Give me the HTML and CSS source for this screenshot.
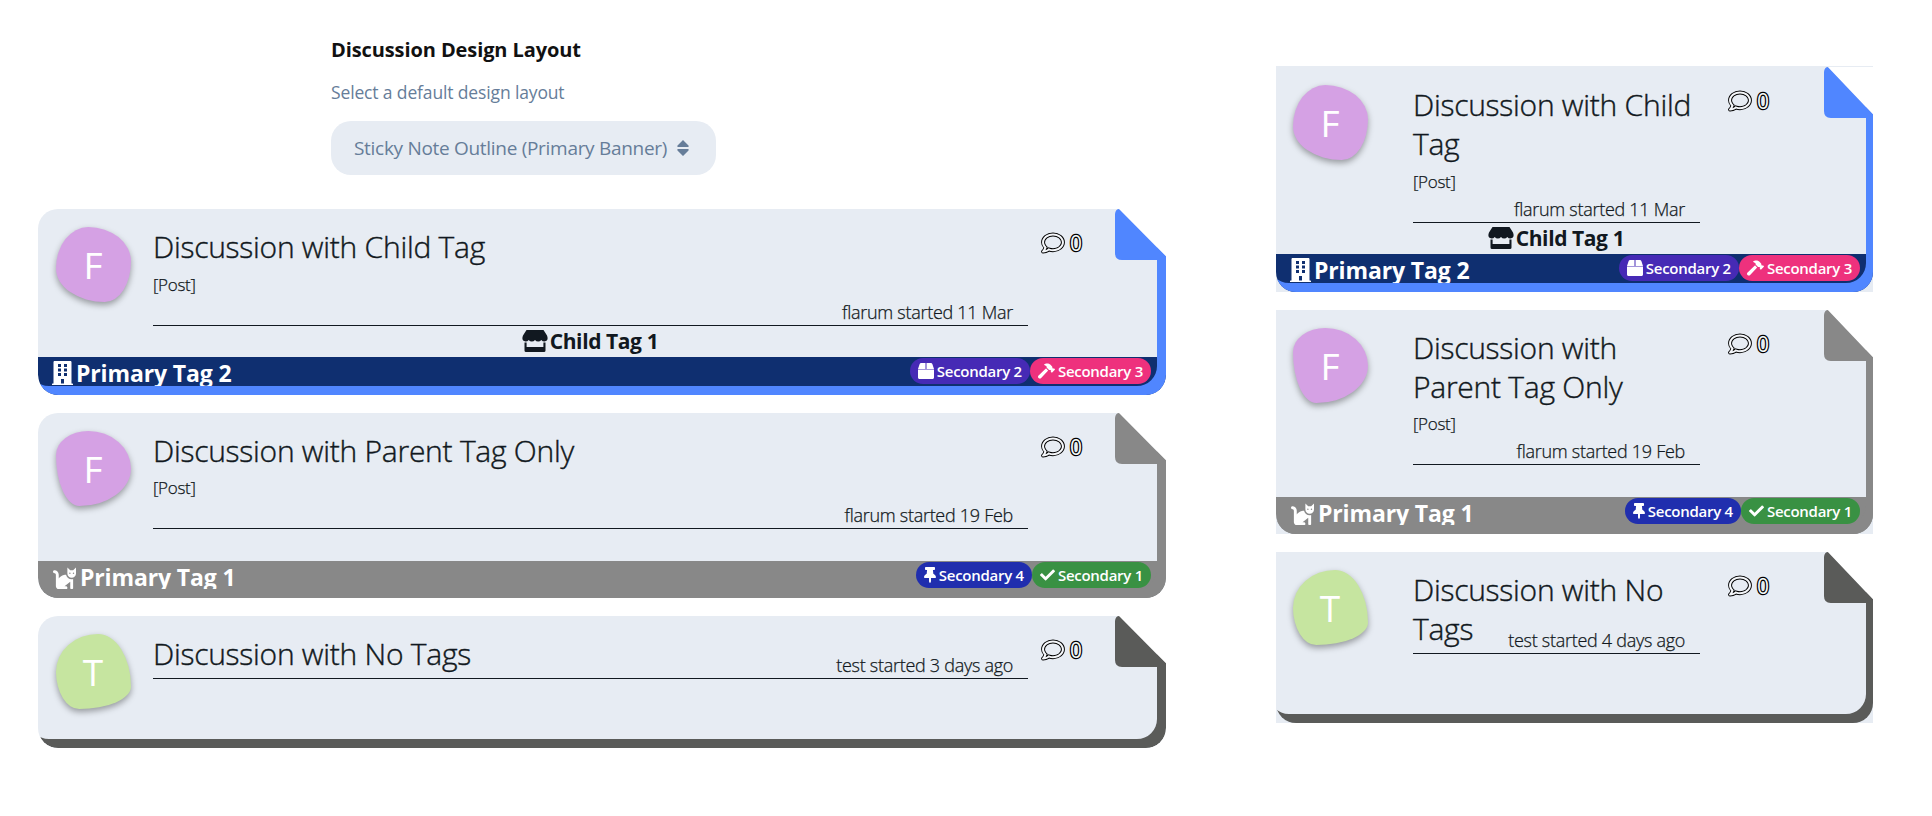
FILE: index.html
```html
<!DOCTYPE html>
<html lang="en">
<head>
<meta charset="utf-8">
<title>Discussion Design Layout</title>
<link rel="stylesheet" href="styles.css">
</head>
<body>
<svg class="sprite" width="0" height="0" aria-hidden="true">
  <symbol id="comment" viewBox="-24 8 560 496"><path d="M256 32C114.600 32 0 125.100 0 240c0 47.600 19.900 91.200 52.900 126.300C38 405.700 7 439.100 6.500 439.500c-6.600 7-8.400 17.200-4.600 26S14.400 480 24 480c61.500 0 110-25.700 139.100-46.300C192 442.800 223.200 448 256 448c141.400 0 256-93.100 256-208S397.400 32 256 32zm0 368c-26.700 0-53.100-4.100-78.400-12.100l-22.700-7.200-19.500 13.800c-14.300 10.100-33.900 21.400-57.500 29 7.300-12.100 14.400-25.700 19.900-40.200l10.600-28.100-20.600-21.800C69.700 314.100 48 282.200 48 240c0-88.200 93.300-160 208-160s208 71.800 208 160-93.300 160-208 160z"/></symbol>
  <symbol id="building" viewBox="0 0 448 512"><path fill-rule="evenodd" d="M436 480h-20V24c0-13-11-24-24-24H56C43 0 32 11 32 24v456H12c-7 0-12 5-12 12v20h448v-20c0-7-5-12-12-12zM128 64h64v64h-64zM128 160h64v64h-64zM128 256h64v64h-64zM256 64h64v64h-64zM256 160h64v64h-64zM256 256h64v64h-64zM192 384h64v96h-64z"/></symbol>
  <symbol id="store" viewBox="0 0 26 22"><path d="M4.500 0H21.500L25 5.500Q27 10.500 22.500 11.500Q20.500 11.500 19.300 10Q18 11.500 16.200 11.500Q14.300 11.500 13 10Q11.700 11.500 9.800 11.500Q8 11.500 6.700 10Q5.500 11.500 3.500 11.500Q-1 10.500 1 5.500zM2.500 12.500H4.600V17H21.400V12.500H23.500V20.500Q23.500 22 22 22H4Q2.500 22 2.500 20.500z"/></symbol>
  <symbol id="cat" viewBox="0 0 512 512"><path d="M290.600 192c-20.200 0-106.800 2-162.600 86V192c0-52.900-43.100-96-96-96-17.700 0-32 14.300-32 32s14.300 32 32 32c17.600 0 32 14.400 32 32v256c0 35.300 28.700 64 64 64h176c8.800 0 16-7.200 16-16v-16c0-17.700-14.300-32-32-32h-32l128-96v144c0 8.800 7.200 16 16 16h32c8.800 0 16-7.200 16-16V289.900c-10.300 2.700-20.900 4.500-32 4.500-61.800 0-113.500-44.100-125.400-102.400zM448 96h-64l-64-64v134.400c0 53 43 96 96 96s96-43 96-96V32l-64 64zm-72 80c-8.800 0-16-7.200-16-16s7.200-16 16-16 16 7.200 16 16-7.200 16-16 16zm80 0c-8.800 0-16-7.200-16-16s7.200-16 16-16 16 7.200 16 16-7.200 16-16 16z"/></symbol>
  <symbol id="box" viewBox="0 0 512 512"><path d="M509.500 184.600L458.900 32.800C452.400 13.200 434.100 0 413.400 0H272v192h238.700c-.4-2.500-.4-5-1.200-7.400zM240 0H98.600c-20.700 0-39 13.200-45.500 32.800L2.500 184.600c-.8 2.400-.8 4.900-1.200 7.400H240V0zM0 208v256c0 26.500 21.500 48 48 48h416c26.500 0 48-21.500 48-48V208H0z"/></symbol>
  <symbol id="hammer" viewBox="0 0 576 512"><path d="M571.310 193.940l-22.630-22.630c-6.250-6.250-16.380-6.250-22.630 0l-11.310 11.310-28.900-28.900c5.630-21.310.36-44.900-16.350-61.610l-45.250-45.250c-62.480-62.480-163.790-62.480-226.280 0l90.510 45.250v18.750c0 16.970 6.740 33.250 18.750 45.250l49.140 49.140c16.710 16.710 40.300 21.980 61.610 16.350l28.900 28.900-11.310 11.310c-6.250 6.250-6.250 16.380 0 22.630l22.630 22.630c6.250 6.250 16.380 6.250 22.630 0l90.510-90.510c6.230-6.240 6.230-16.370-.02-22.620zm-286.720-15.200c-3.700-3.700-6.840-7.790-9.850-11.950L19.640 404.960c-25.570 23.880-26.260 64.190-1.530 88.930s65.050 24.050 88.920-1.530l238.130-255.070c-3.960-2.910-7.900-5.870-11.440-9.410l-49.130-49.140z"/></symbol>
  <symbol id="pin" viewBox="0 0 384 512"><path d="M298 214L286 96h42c13 0 24-11 24-24V24c0-13-11-24-24-24H56C43 0 32 11 32 24v48c0 13 11 24 24 24h42L86 214C37 237 0 277 0 328c0 13 11 24 24 24h136v104c0 1 0 2 1 4l24 48c3 6 11 6 14 0l24-48c1-1 1-2 1-4V352h136c13 0 24-11 24-24 0-51-38-91-86-114z"/></symbol>
  <symbol id="check" viewBox="0 0 512 512"><path d="M173.900 439.400L7.500 273c-10-10-10-26.200 0-36.200l36.200-36.200c10-10 26.200-10 36.200 0L192 312.700 432.100 72.600c10-10 26.200-10 36.200 0l36.200 36.200c10 10 10 26.200 0 36.200L210.100 439.400c-10 10-26.200 10-36.200 0z"/></symbol>
  <symbol id="fold" viewBox="0 0 51 51" preserveAspectRatio="none"><path fill="#fff" d="M3.500 0L51 47.500V0z"/><path d="M5 1L51 47.500V51H7Q0 51 0 44V5Q.500 .500 3.500 0Q4.200 0 5 1z"/></symbol>
</svg>

<main class="page">
  <section class="wide">
    <div class="setting">
      <h1>Discussion Design Layout</h1>
      <p>Select a default design layout</p>
      <button class="select"><span>Sticky Note Outline (Primary Banner)</span><svg viewBox="0 0 12 16"><path d="M6 0l5.500 5.500q.8 1.300-.7 1.500H1.200Q-.3 6.800.5 5.500zM6 16l5.500-5.500q.8-1.300-.7-1.500H1.200Q-.3 9.200.5 10.500z"/></svg></button>
    </div>
    <article class="card blue w1">
      <div class="body">
        <div class="avatar blob-a">F</div>
        <div class="main"><h2>Discussion with Child Tag</h2><p class="post">[Post]</p><p class="info">flarum started 11 Mar</p></div>
        <div class="count"><svg><use href="#comment"/></svg><span>0</span></div>
        <div class="child"><svg><use href="#store"/></svg><span>Child Tag 1</span></div>
      </div>
      <div class="banner"><div class="primary"><svg class="building"><use href="#building"/></svg><span>Primary Tag 2</span></div></div>
      <div class="badges"><span class="badge purple"><svg><use href="#box"/></svg><b>Secondary 2</b></span><span class="badge pink"><svg><use href="#hammer"/></svg><b>Secondary 3</b></span></div>
      <svg class="fold"><use href="#fold"/></svg>
    </article>
    <article class="card gray w2">
      <div class="body">
        <div class="avatar blob-b">F</div>
        <div class="main"><h2>Discussion with Parent Tag Only</h2><p class="post">[Post]</p><p class="info">flarum started 19 Feb</p></div>
        <div class="count"><svg><use href="#comment"/></svg><span>0</span></div>
      </div>
      <div class="banner"><div class="primary"><svg class="cat"><use href="#cat"/></svg><span>Primary Tag 1</span></div></div>
      <div class="badges"><span class="badge navy"><svg><use href="#pin"/></svg><b>Secondary 4</b></span><span class="badge green"><svg><use href="#check"/></svg><b>Secondary 1</b></span></div>
      <svg class="fold"><use href="#fold"/></svg>
    </article>
    <article class="card dark w3">
      <div class="body">
        <div class="avatar blob-c">T</div>
        <div class="main"><h2>Discussion with No Tags</h2><p class="info">test started 3 days ago</p></div>
        <div class="count"><svg><use href="#comment"/></svg><span>0</span></div>
      </div>
      <svg class="fold"><use href="#fold"/></svg>
    </article>
  </section>

  <section class="narrow">
    <article class="card blue n1">
      <div class="body">
        <div class="avatar blob-a">F</div>
        <div class="main"><h2>Discussion with Child<br>Tag</h2><p class="post">[Post]</p><p class="info">flarum started 11 Mar</p></div>
        <div class="count"><svg><use href="#comment"/></svg><span>0</span></div>
        <div class="child"><svg><use href="#store"/></svg><span>Child Tag 1</span></div>
      </div>
      <div class="banner"><div class="primary"><svg class="building"><use href="#building"/></svg><span>Primary Tag 2</span></div></div>
      <div class="badges"><span class="badge purple"><svg><use href="#box"/></svg><b>Secondary 2</b></span><span class="badge pink"><svg><use href="#hammer"/></svg><b>Secondary 3</b></span></div>
      <svg class="fold"><use href="#fold"/></svg>
    </article>
    <article class="card gray n2">
      <div class="body">
        <div class="avatar blob-b">F</div>
        <div class="main"><h2>Discussion with<br>Parent Tag Only</h2><p class="post">[Post]</p><p class="info">flarum started 19 Feb</p></div>
        <div class="count"><svg><use href="#comment"/></svg><span>0</span></div>
      </div>
      <div class="banner"><div class="primary"><svg class="cat"><use href="#cat"/></svg><span>Primary Tag 1</span></div></div>
      <div class="badges"><span class="badge navy"><svg><use href="#pin"/></svg><b>Secondary 4</b></span><span class="badge green"><svg><use href="#check"/></svg><b>Secondary 1</b></span></div>
      <svg class="fold"><use href="#fold"/></svg>
    </article>
    <article class="card dark n3">
      <div class="body">
        <div class="avatar blob-c">T</div>
        <div class="main"><h2>Discussion with No<br>Tags</h2><p class="info">test started 4 days ago</p></div>
        <div class="count"><svg><use href="#comment"/></svg><span>0</span></div>
      </div>
      <svg class="fold"><use href="#fold"/></svg>
    </article>
  </section>
</main>
</body>
</html>
```

FILE: styles.css
```css
* { box-sizing: border-box; margin: 0; padding: 0; }
body { background: #fff; color: #111820; font-family: "Open Sans", "Noto Sans", sans-serif; }
.sprite { position: absolute; }
svg { display: block; fill: currentColor; flex: none; }
span, b, h1, h2, p { white-space: nowrap; }
.page { display: flex; width: 1932px; height: 816px; padding-left: 38px; gap: 110px; }

.wide { width: 1128px; display: flex; flex-direction: column; gap: 18px; padding-top: 36px; }
.setting { height: 155px; padding-left: 293px; color: #667d99; }
.setting h1 { font-size: 20px; line-height: 28px; font-weight: 700; color: #111; letter-spacing: -.1px; }
.setting p { margin-top: 15px; font-size: 17.500px; line-height: 26px; letter-spacing: -.14px; }
.select { margin-top: 16px; width: 385px; height: 54px; border: 0; border-radius: 20px; background: #e7ecf3; display: flex; align-items: center; gap: 10px; padding-left: 23px; font: 400 19px "Open Sans", sans-serif; letter-spacing: -.3px; color: inherit; }
.select svg { width: 12px; height: 16px; }
.select span { width: 313px; text-align: left; }

.narrow { width: 597px; display: flex; flex-direction: column; gap: 18px; padding-top: 66px; }

.card { --edge: 9px; position: relative; background: #e7ecf3; border-radius: 20px 0 20px 20px; display: flex; flex-direction: column; overflow: hidden; }
.card::after { content: ""; position: absolute; inset: 0; border-radius: 20px; box-shadow: inset calc(-1 * var(--edge)) -9px 0 var(--tone); }
.narrow .card { --edge: 7px; border-radius: 0; }
.blue { --tone: #5086ff; --band: #0f2f70; }
.gray { --tone: #888; --band: #888; }
.dark { --tone: #5a5b59; }
.w1 { height: 186px; --rule: 117px; }
.w2 { height: 185px; --rule: 116px; }
.w3 { height: 132px; --rule: 63px; }
.n1 { height: 226px; --rule: 156px; padding-top: 1px; }
.n2 { height: 224px; --rule: 155px; }
.n3 { height: 171px; --rule: 102px; }

.body { flex: 1; display: grid; grid-template-columns: 75px 875px auto; column-gap: 22px; grid-template-rows: var(--rule) auto; padding-left: 18px; justify-content: start; }
.narrow .body { grid-template-columns: 75px 287px auto; column-gap: 45px; padding-left: 17px; }
.avatar { margin-top: 18px; width: 75px; height: 75px; padding-right: 1px; color: #fff; font-size: 37px; line-height: 76px; text-align: center; background: #d5a1e4; box-shadow: 0 3px 6px rgba(0,0,0,.35); }
.blob-a { border-radius: 43% 57% 35% 65% / 55% 46% 54% 45%; }
.blob-b { border-radius: 43% 57% 69% 31% / 32% 50% 50% 68%; }
.blob-c { border-radius: 56% 44% 69% 31% / 50% 70% 30% 50%; background: #c6e5a0; }
.main { position: relative; border-bottom: 1px solid #111820; padding-top: 18px; }
h2 { font-size: 30px; font-weight: 300; line-height: 39px; letter-spacing: -.26px; -webkit-text-stroke: .4px currentColor; }
.post { font-size: 17px; font-weight: 300; line-height: 24px; margin-top: 7px; letter-spacing: -.3px; -webkit-text-stroke: .25px currentColor; }
.gray .post { margin-top: 6px; }
.info { position: absolute; right: 15px; bottom: 1px; font-size: 18px; font-weight: 300; line-height: 24px; letter-spacing: -.28px; -webkit-text-stroke: .25px currentColor; }
.count { display: flex; height: 24px; margin: 22px 0 0 -9px; gap: 5px; color: #f5f7fa; font-size: 21px; line-height: 25px; }
.narrow .count { margin-left: -17px; }
.count svg { width: 24px; height: 24px; overflow: visible; stroke: #000; stroke-width: 44px; paint-order: stroke; }
.count span { -webkit-text-stroke: 2.500px #000; paint-order: stroke fill; }
.child { grid-column: 2; display: flex; justify-content: center; align-items: center; gap: 2px; height: 28px; font-size: 21px; font-weight: 700; letter-spacing: -.4px; padding: 1px 1px 0 0; }
.child svg { width: 26px; height: 22px; }
.banner { height: 38px; background: var(--band); border-radius: 0 0 20px 20px; padding: 4px 0 0 14px; }
.gray .banner { height: 37px; padding: 4px 0 0 14px; }
.primary { display: flex; gap: 3px; height: 25px; overflow: hidden; font-size: 23px; font-weight: 700; line-height: 25px; color: #fff; letter-spacing: -.14px; }
.building { width: 21px; height: 24px; }
.cat { width: 25px; height: 23px; margin-top: 1px; }
.badges { position: absolute; z-index: 2; right: 15px; bottom: 11px; display: flex; }
.gray .badges { bottom: 10px; }
.narrow .badges { right: 13px; }
.badge { height: 26px; border-radius: 13px; display: flex; align-items: center; gap: 3px; padding: 0 8px; color: #fff; font-size: 15px; }
.badge b { font-weight: 600; letter-spacing: -.27px; }
.badge svg { width: 15px; height: 16px; }
.purple svg { width: 16px; }
.pink svg { width: 17px; }
.navy svg { width: 12px; }
.purple { background: #462ab5; }
.pink { background: #ee317d; }
.navy { background: #202eae; }
.green { background: #399143; }
.fold { position: absolute; z-index: 2; top: 0; right: 0; width: 51px; height: 51px; color: var(--tone); }
.narrow .fold { width: 49px; }
.n1 .fold { top: 1px; }
```
